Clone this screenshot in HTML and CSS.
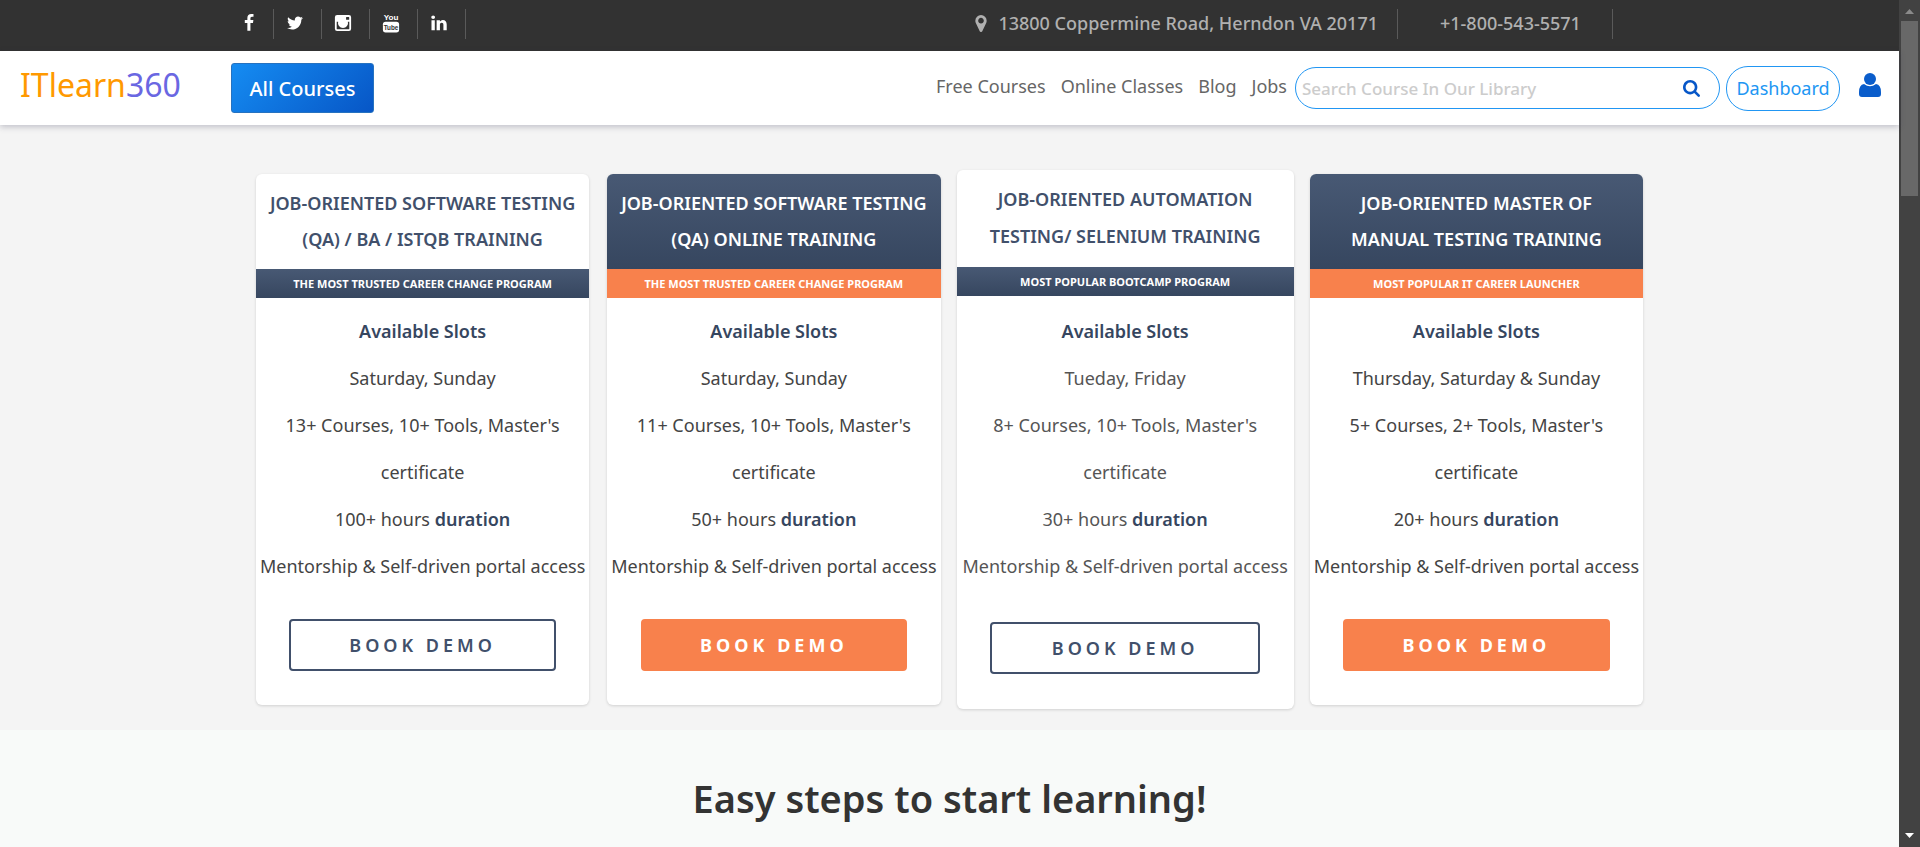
FILE: index.html
```html
<!DOCTYPE html>
<html lang="en">
<head>
<meta charset="utf-8">
<title>ITlearn360</title>
<link rel="stylesheet" href="styles.css">
</head>
<body>
<div class="page">
  <div class="topbar">
    <ul class="social">
      <li><a href="#" aria-label="Facebook"><svg class="icon" viewBox="0 0 1792 1792"><path transform="translate(-300 0)" d="M1343 12v264h-157q-86 0-116 36t-30 108v189h293l-39 296h-254v759h-306v-759h-255v-296h255v-218q0-186 104-288.500t277-102.500q147 0 228 12z"/></svg></a></li>
      <li><a href="#" aria-label="Twitter"><svg class="icon" viewBox="0 0 1792 1792"><path d="M1684 408q-67 98-162 167 1 14 1 42 0 130-38 259.500t-115.500 248.500-184.500 210.500-258 146-323 54.500q-271 0-496-145 35 4 78 4 225 0 401-138-105-2-188-64.500t-114-159.500q33 5 61 5 43 0 85-11-112-23-185.500-111.500t-73.500-205.500v-4q68 38 146 41-66-44-105-115t-39-154q0-88 44-163 121 149 294.500 238.500t371.500 99.500q-8-38-8-74 0-134 94.500-228.500t228.500-94.500q140 0 236 102 109-21 205-78-37 115-142 178 93-10 186-50z"/></svg></a></li>
      <li><a href="#" aria-label="Instagram"><svg class="icon" viewBox="0 0 20 20"><path fill-rule="evenodd" d="M3.500 1h13a2.500 2.500 0 0 1 2.500 2.500v13a2.500 2.500 0 0 1-2.500 2.500h-13a2.500 2.500 0 0 1-2.500-2.500v-13a2.500 2.500 0 0 1 2.500-2.500zM3 8.500v7.800q0 .7.700.7h12.600q.7 0 .7-.7V8.500h-1.600a5.600 5.600 0 1 1-10.800 0zM14 3.200q-.6 0-.6.600v2.100q0 .6.600.6h2.300q.6 0 .6-.6V3.800q0-.6-.6-.6z"/><path fill-rule="evenodd" d="M10 5.500a4.500 4.500 0 1 1 0 9 4.500 4.500 0 0 1 0-9zm0 1.300a3.200 3.200 0 1 0 0 6.400 3.200 3.200 0 0 0 0-6.400z"/></svg></a></li>
      <li><a href="#" aria-label="YouTube"><svg class="icon" viewBox="0 0 20 20"><rect x="1" y="8.500" width="18" height="12" rx="3"/><text class="yt-top" x="10" y="7">You</text><text class="yt-low" x="10" y="18">Tube</text></svg></a></li>
      <li><a href="#" aria-label="LinkedIn"><svg class="icon" viewBox="0 0 1792 1792"><path d="M477 625v991h-330v-991h330zm21-306q1 73-50.500 122t-135.500 49h-2q-82 0-132-49t-50-122q0-74 51.500-122.500t134.500-48.500 133 48.500 51 122.500zm1166 729v568h-329v-530q0-105-40.500-164.500t-126.500-59.500q-63 0-105.500 34.500t-63.500 85.500q-11 30-11 81v553h-329q2-399 2-647t-1-296l-1-48h329v144h-2q20-32 41-56t56.500-52 87-43.500 114.500-15.500q171 0 275 113.500t104 332.500z"/></svg></a></li>
    </ul>
    <ul class="contact">
      <li><svg class="pin" viewBox="384 128 1024 1536"><path d="M1152 640q0-106-75-181t-181-75-181 75-75 181 75 181 181 75 181-75 75-181zm256 0q0 109-33 179l-364 774q-16 33-47.500 52t-67.500 19-67.500-19-46.500-52l-365-774q-33-70-33-179 0-212 150-362t362-150 362 150 150 362z"/></svg>13800 Coppermine Road, Herndon VA 20171</li>
      <li class="phone">+1-800-543-5571</li>
    </ul>
  </div>

  <header class="nav">
    <a class="logo" href="#">ITlearn<span class="logo-num">360</span></a>
    <button class="all-courses" type="button">All Courses</button>
    <nav class="links">
      <a href="#">Free Courses</a>
      <a href="#">Online Classes</a>
      <a href="#">Blog</a>
      <a href="#">Jobs</a>
    </nav>
    <form class="search">
      <input class="search-input" type="text" placeholder="Search Course In Our Library" aria-label="Search course in our library">
      <button class="search-btn" type="button" aria-label="Search"><svg class="search-icon" viewBox="64 128 1664 1664"><path d="M1216 832q0-185-131.500-316.500t-316.500-131.500-316.500 131.500-131.500 316.500 131.500 316.500 316.500 131.500 316.500-131.500 131.500-316.500zm512 832q0 52-38 90t-90 38q-54 0-90-38l-343-342q-179 124-399 124-143 0-273.500-55.500t-225-150-150-225-55.500-273.500 55.500-273.500 150-225 225-150 273.500-55.500 273.500 55.500 225 150 150 225 55.500 273.500q0 220-124 399l343 343q37 37 37 90z"/></svg></button>
    </form>
    <a class="dashboard" href="#">Dashboard</a>
    <a class="account" href="#" aria-label="Account"><svg class="user-icon" viewBox="0 0 22 24"><circle cx="11" cy="6" r="6"/><path d="M5 11q6 4.600 12 0 5 .8 5 8v2q0 3-3 3H3q-3 0-3-3v-2q0-7.200 5-8z"/></svg></a>
  </header>

  <section class="courses">
    <article class="card">
      <h2 class="card-title">JOB-ORIENTED SOFTWARE TESTING<br>(QA) / BA / ISTQB TRAINING</h2>
      <p class="ribbon">THE MOST TRUSTED CAREER CHANGE PROGRAM</p>
      <ul class="features">
        <li><strong>Available Slots</strong></li>
        <li>Saturday, Sunday</li>
        <li>13+ Courses, 10+ Tools, Master's<br>certificate</li>
        <li>100+ hours <strong>duration</strong></li>
        <li>Mentorship &amp; Self-driven portal access</li>
      </ul>
      <button class="book" type="button">BOOK DEMO</button>
    </article>
    <article class="card featured">
      <h2 class="card-title">JOB-ORIENTED SOFTWARE TESTING<br>(QA) ONLINE TRAINING</h2>
      <p class="ribbon">THE MOST TRUSTED CAREER CHANGE PROGRAM</p>
      <ul class="features">
        <li><strong>Available Slots</strong></li>
        <li>Saturday, Sunday</li>
        <li>11+ Courses, 10+ Tools, Master's<br>certificate</li>
        <li>50+ hours <strong>duration</strong></li>
        <li>Mentorship &amp; Self-driven portal access</li>
      </ul>
      <button class="book" type="button">BOOK DEMO</button>
    </article>
    <article class="card raised">
      <h2 class="card-title">JOB-ORIENTED AUTOMATION<br>TESTING/ SELENIUM TRAINING</h2>
      <p class="ribbon">MOST POPULAR BOOTCAMP PROGRAM</p>
      <ul class="features">
        <li><strong>Available Slots</strong></li>
        <li>Tueday, Friday</li>
        <li>8+ Courses, 10+ Tools, Master's<br>certificate</li>
        <li>30+ hours <strong>duration</strong></li>
        <li>Mentorship &amp; Self-driven portal access</li>
      </ul>
      <button class="book" type="button">BOOK DEMO</button>
    </article>
    <article class="card featured">
      <h2 class="card-title">JOB-ORIENTED MASTER OF<br>MANUAL TESTING TRAINING</h2>
      <p class="ribbon">MOST POPULAR IT CAREER LAUNCHER</p>
      <ul class="features">
        <li><strong>Available Slots</strong></li>
        <li>Thursday, Saturday &amp; Sunday</li>
        <li>5+ Courses, 2+ Tools, Master's<br>certificate</li>
        <li>20+ hours <strong>duration</strong></li>
        <li>Mentorship &amp; Self-driven portal access</li>
      </ul>
      <button class="book" type="button">BOOK DEMO</button>
    </article>
  </section>

  <section class="steps">
    <h1 class="steps-title">Easy steps to start learning!</h1>
  </section>
</div>
<div class="scrollbar" aria-hidden="true">
  <svg class="arrow" viewBox="0 0 9 5"><path d="M0 5h9L4.500 0z"/></svg>
  <div class="thumb"></div>
  <svg class="arrow arrow-down" viewBox="0 0 9 5"><path d="M0 0h9L4.500 5z"/></svg>
</div>
</body>
</html>
```
FILE: styles.css
```css
* {
  box-sizing: border-box;
}

body {
  margin: 0;
  display: flex;
  height: 100vh;
  overflow: hidden;
  font-family: "Noto Sans", "Open Sans", sans-serif;
  font-size: 18px;
  color: #333;
}

ul,
h1,
h2,
p {
  margin: 0;
  padding: 0;
  list-style: none;
}

a {
  color: inherit;
  text-decoration: none;
}

button {
  font-family: inherit;
  cursor: pointer;
}

.page {
  flex: 1;
  display: flex;
  flex-direction: column;
  background: #f4f4f4;
}

/* Top bar */
.topbar {
  display: flex;
  flex-shrink: 0;
  justify-content: space-between;
  padding: 9px 286px 12px 231px;
  background: #323232;
}

.social,
.contact {
  display: flex;
}

.social li,
.contact li {
  display: flex;
  align-items: center;
  height: 30px;
  border-right: 1px solid #5a5a5a;
}

.social li {
  padding: 0 17px 2px 12px;
}

.social li:first-child {
  padding-right: 12px;
}

.icon {
  display: block;
  width: 18px;
  height: 18px;
  fill: #fff;
  overflow: visible;
}

.yt-top,
.yt-low {
  font-family: "Liberation Sans", sans-serif;
  font-weight: bold;
  text-anchor: middle;
}

.yt-top {
  font-size: 9px;
}

.yt-low {
  font-size: 7px;
  fill: #323232;
}

.contact li {
  padding: 0 19px 2px 42px;
  color: #b0b0b0;
  font-weight: 500;
}

.contact .phone {
  min-width: 215px;
}

.pin {
  width: 12px;
  height: 17px;
  margin-right: 11px;
  fill: #b0b0b0;
}

/* Main navigation */
.nav {
  position: relative;
  display: flex;
  flex-shrink: 0;
  align-items: center;
  height: 74px;
  padding: 0 18px 0 20px;
  background: #fff;
  box-shadow: 0 2px 6px rgba(40, 40, 70, 0.25);
}

.logo {
  width: 211px;
  padding-bottom: 6px;
  font-size: 32px;
  line-height: 40px;
  color: #ff9900;
}

.logo-num {
  color: #6a67e2;
}

.all-courses {
  width: 143px;
  height: 50px;
  padding: 0;
  border: 1px solid #2672c0;
  border-radius: 3px;
  background: linear-gradient(135deg, #158cf2, #0756c6);
  color: #fff;
  font-size: 20px;
  font-weight: 500;
}

.links {
  display: flex;
  gap: 15px;
  margin-left: auto;
  padding-bottom: 4px;
  color: #666;
}

.search {
  display: flex;
  align-items: center;
  width: 425px;
  height: 42px;
  margin: 0 6px 0 8px;
  padding: 0 19px 0 6px;
  border: 1px solid #2196f3;
  border-radius: 21px;
}

.search-input {
  flex: 1;
  min-width: 0;
  padding: 0;
  border: 0;
  outline: 0;
  background: none;
  font: inherit;
  font-size: 17px;
  font-weight: 500;
}

.search-input::placeholder {
  color: #ccc;
}

.search-btn {
  padding: 0;
  border: 0;
  background: none;
}

.search-icon {
  display: block;
  width: 17px;
  height: 17px;
  fill: #0757c8;
}

.dashboard {
  width: 114px;
  border: 1px solid #2196f3;
  border-radius: 22px;
  color: #2196f3;
  line-height: 43px;
  text-align: center;
}

.account {
  margin-left: 19px;
  padding-bottom: 6px;
}

.user-icon {
  display: block;
  width: 22px;
  height: 24px;
  fill: #0a5dcb;
}

/* Course cards */
.courses {
  display: grid;
  flex-shrink: 0;
  grid-template-columns: repeat(4, 1fr);
  gap: 18px;
  width: 100%;
  max-width: 1387px;
  margin: 0 auto;
  padding: 49px 0 25px;
}

.card {
  display: flex;
  flex-direction: column;
  border-radius: 6px;
  background: #fff;
  box-shadow: 0 1px 3px rgba(0, 0, 0, 0.15);
  overflow: hidden;
  text-align: center;
}

.card-title {
  padding: 11px 0 12px;
  color: #41506b;
  font-size: 18px;
  font-weight: 600;
  line-height: 36px;
  white-space: nowrap;
}

.ribbon {
  background: linear-gradient(#485974, #36465f);
  color: #fff;
  font-size: 11px;
  font-weight: 700;
  line-height: 29px;
}

.features {
  padding: 10px 0 29px;
  color: #444;
  line-height: 47px;
  white-space: nowrap;
}

.features strong {
  color: #36465f;
  font-weight: 600;
}

.book {
  width: 80%;
  height: 52px;
  margin: 0 auto 34px;
  border: 2px solid #41506b;
  border-radius: 4px;
  background: #fff;
  color: #41506b;
  font-size: 18px;
  font-weight: 600;
  letter-spacing: 4px;
}

.featured .card-title {
  background: linear-gradient(#485974, #36465f);
  color: #fff;
}

.featured .ribbon {
  background: #f8814c;
}

.featured .book {
  border-color: #f8814c;
  background: #f8814c;
  color: #fff;
  font-weight: 700;
}

.raised {
  margin: -4px -2px;
}

.raised .card-title {
  line-height: 37px;
}

.raised .features {
  padding: 12px 0 32px;
  color: #555;
}

.raised .book {
  margin-bottom: 35px;
}

/* Steps */
.steps {
  flex: 1;
  padding: 40px 0;
  background: #f8faf9;
}

.steps-title {
  color: #333;
  font-size: 38px;
  font-weight: 600;
  line-height: 56px;
  text-align: center;
}

/* Scrollbar */
.scrollbar {
  display: flex;
  flex-direction: column;
  align-items: center;
  width: 21px;
  padding: 9px 2px;
  background: #424242;
}

.arrow {
  width: 9px;
  height: 5px;
  fill: #8a8a8a;
}

.arrow-down {
  margin-top: auto;
  fill: #fff;
}

.thumb {
  width: 17px;
  height: 175px;
  margin-top: 7px;
  background: #686868;
}
```
